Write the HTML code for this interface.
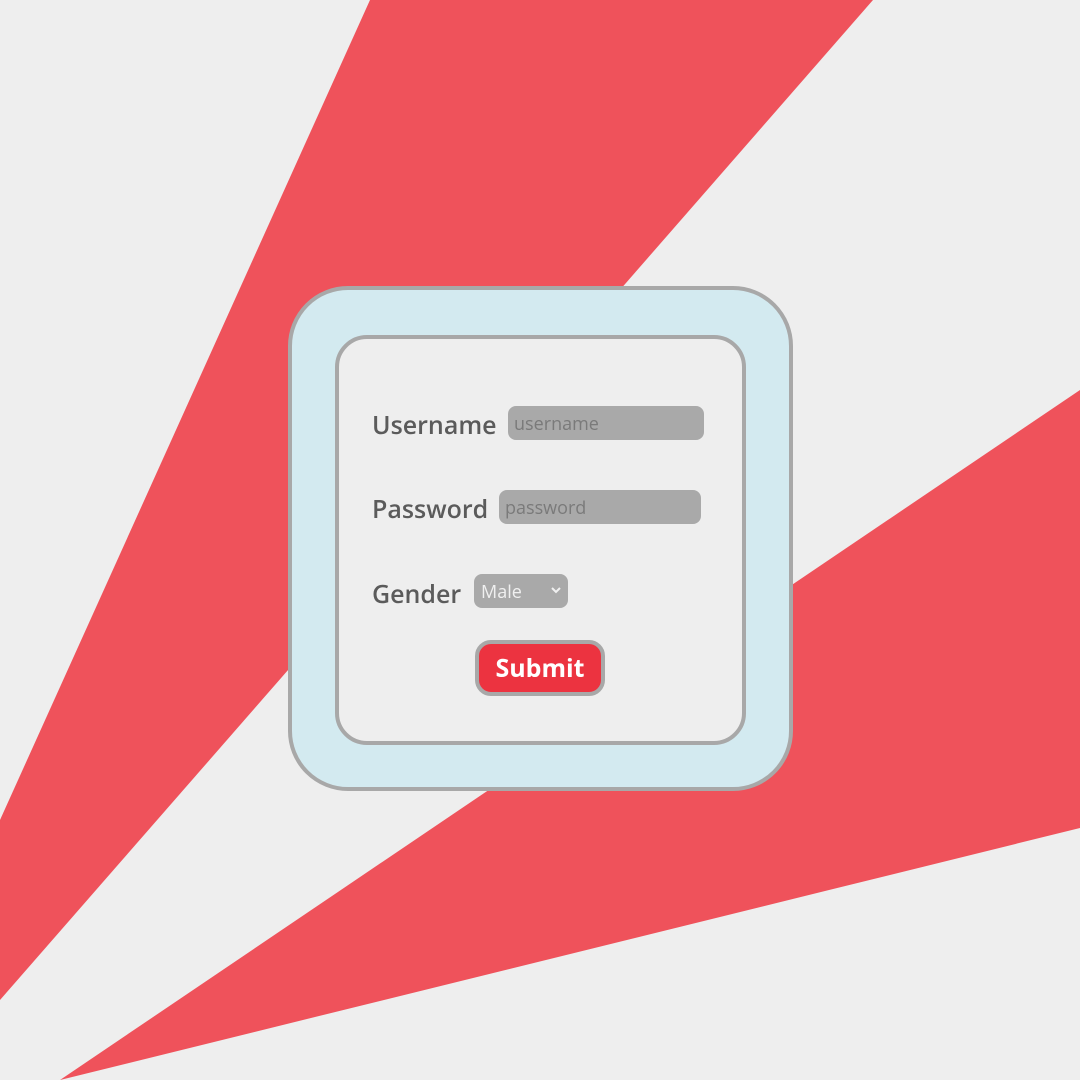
<!DOCTYPE html>
<html><head><style>
html,body{margin:0;padding:0;width:1080px;height:1080px;overflow:hidden;background:#eeeeee;font-family:"Open Sans","Liberation Sans","DejaVu Sans",sans-serif}
.abs{position:absolute}
.outer{left:288px;top:286px;width:497px;height:497px;border:4px solid #a8a8a8;border-radius:60px;background:#d3eaf0;box-sizing:content-box}
.inner{left:335px;top:335px;width:403px;height:402px;border:4px solid #a8a8a8;border-radius:32px;background:#eeeeee}
.lbl{color:#5b5b5b;font-size:25px;line-height:1;font-weight:600}
.inp{background:#a9a9a9;border-radius:8px;color:#7a7a7a;font-size:18px;box-sizing:border-box;padding-left:6px;line-height:36px}
.btn{left:475px;top:640px;width:130px;height:56px;box-sizing:border-box;border:4px solid #a8a8a8;border-radius:16px;background:#ec3340;color:#fff;font-weight:bold;font-size:25px;text-align:center;line-height:49px}
</style></head><body>
<svg class="abs" style="left:0;top:0" width="1080" height="1080">
<polygon points="370,0 873,0 0,1000 0,820" fill="#ef525b"/>
<polygon points="1080,390 1080,828 60,1080" fill="#ef525b"/>
</svg>
<div class="abs outer"></div>
<div class="abs inner"></div>
<div class="abs lbl" style="left:372px;top:413px">Username</div>
<div class="abs inp" style="left:508px;top:406px;width:196px;height:34px">username</div>
<div class="abs lbl" style="left:372px;top:497px">Password</div>
<div class="abs inp" style="left:499px;top:490px;width:202px;height:34px">password</div>
<div class="abs lbl" style="left:372px;top:582px">Gender</div>
<div class="abs inp" style="left:474px;top:574px;width:94px;height:34px;color:#f0f0f0;padding-left:7px">Male
<svg class="abs" style="left:77px;top:13px" width="10" height="7"><path d="M1,1 L5,5 L9,1" stroke="#f0f0f0" stroke-width="2" fill="none"/></svg></div>
<div class="abs btn">Submit</div>
</body></html>
